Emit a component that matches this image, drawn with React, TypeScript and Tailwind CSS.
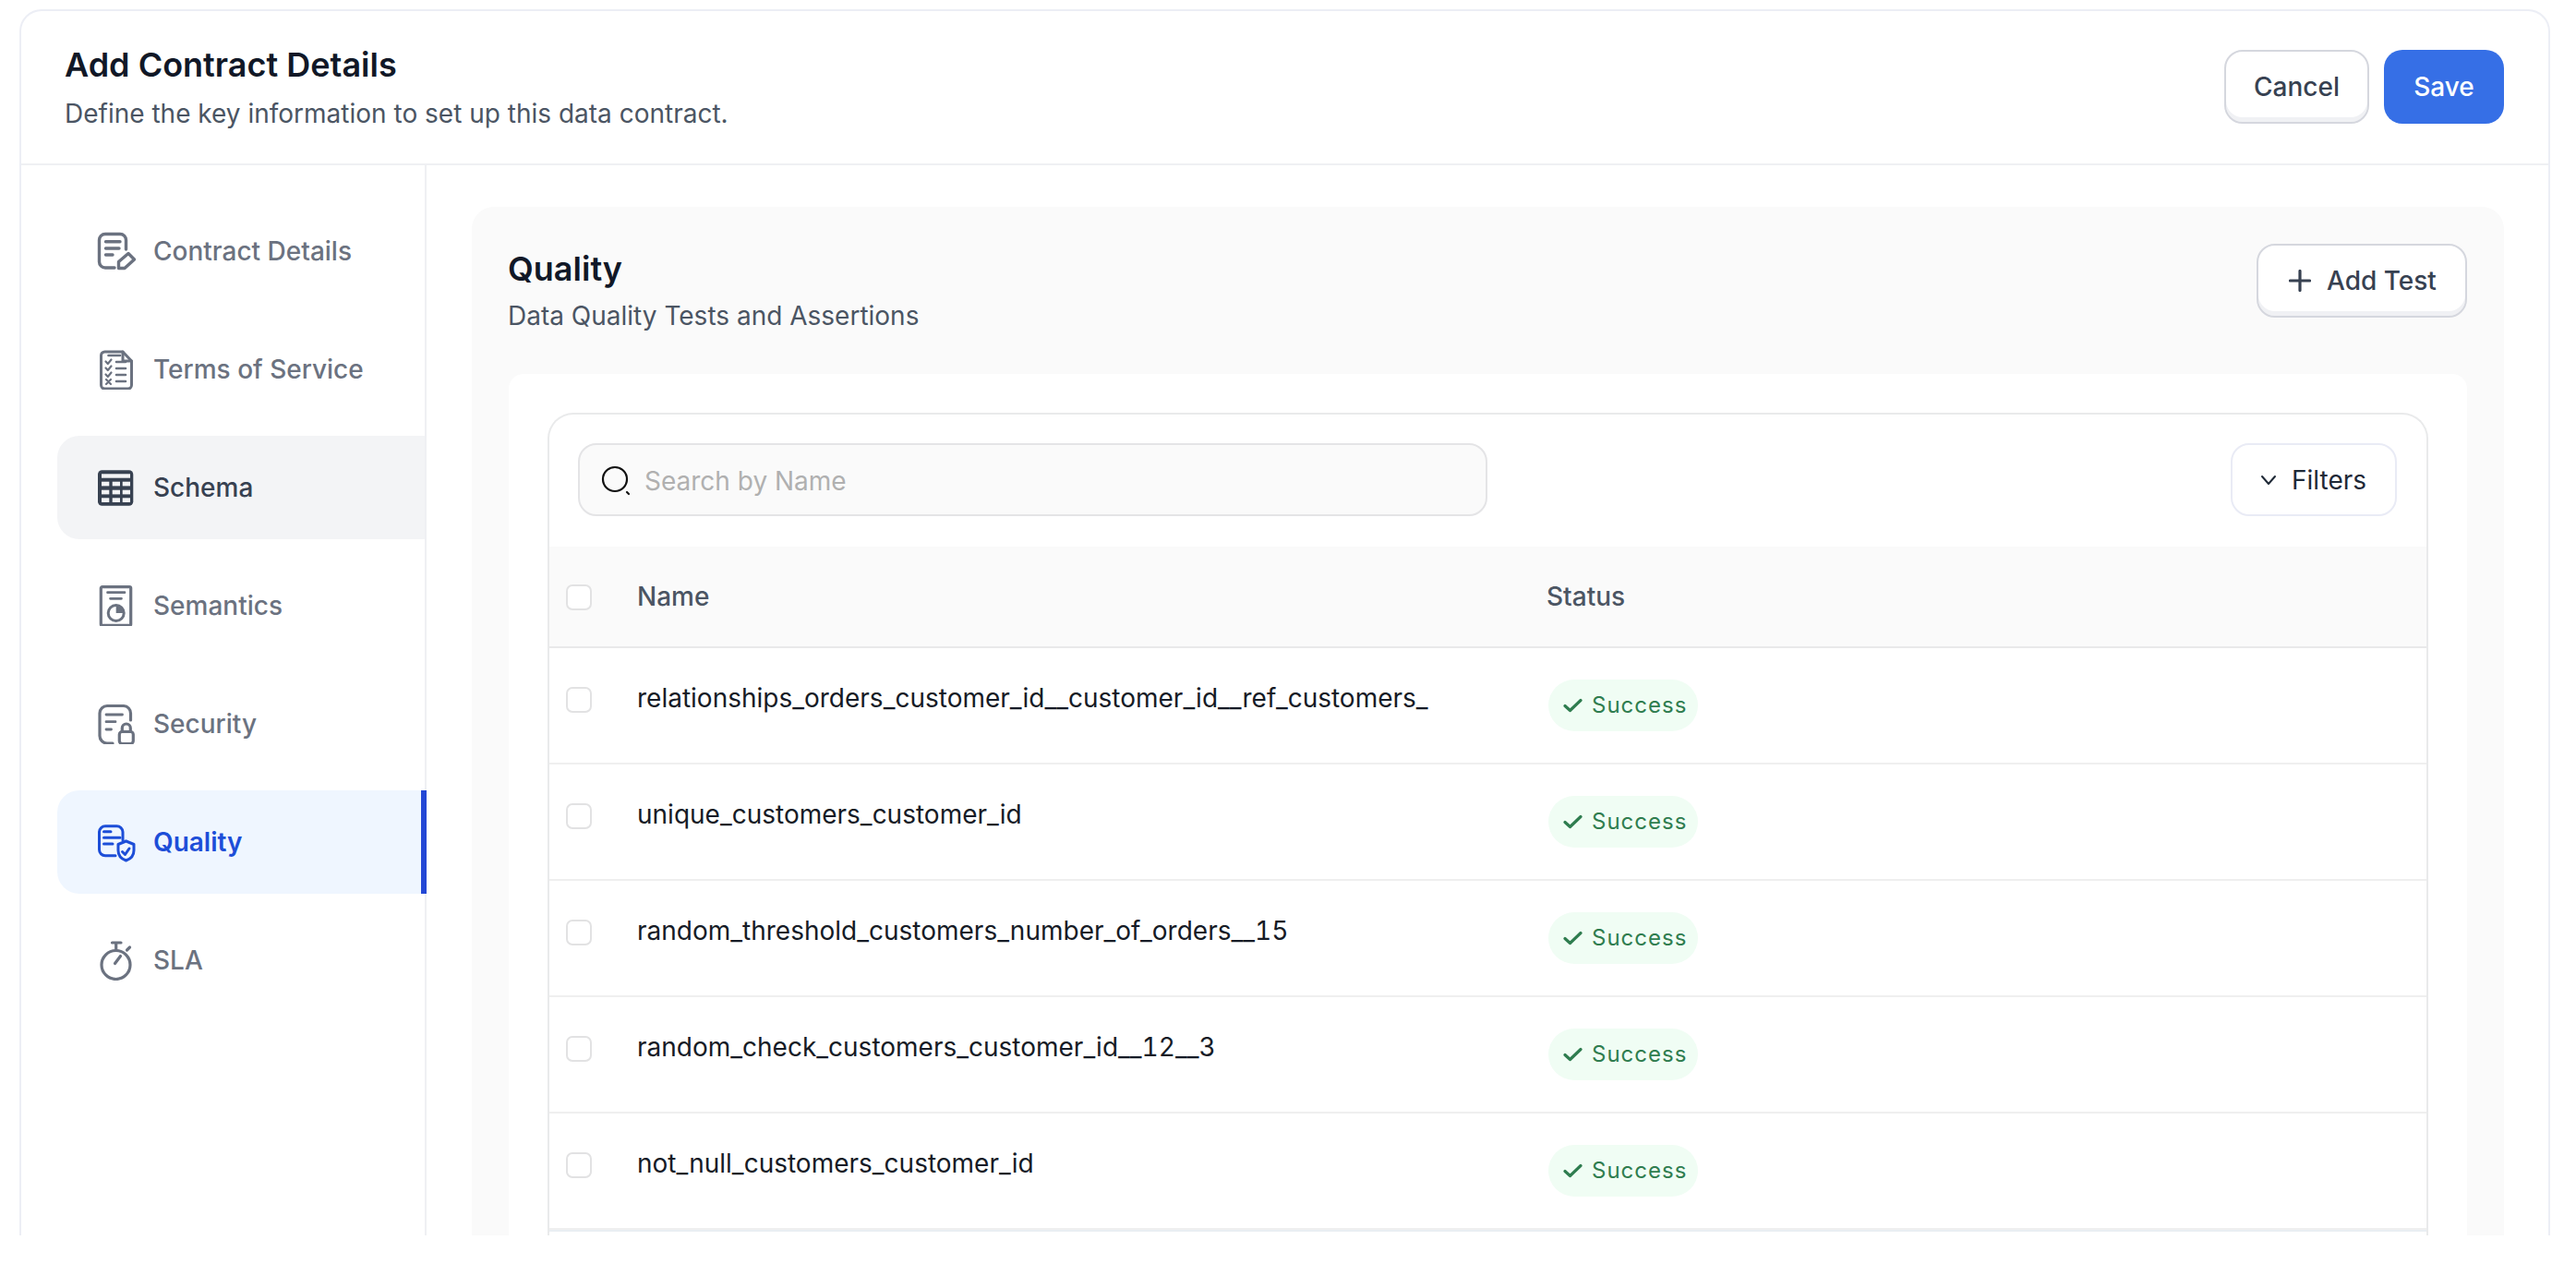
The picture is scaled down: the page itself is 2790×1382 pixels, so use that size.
const tests = [
  "relationships_orders_customer_id__customer_id__ref_customers_",
  "unique_customers_customer_id",
  "random_threshold_customers_number_of_orders__15",
  "random_check_customers_customer_id__12__3",
  "not_null_customers_customer_id",
];

function ContractIcon() {
  return (
    <svg width="44" height="44" viewBox="0 0 44 44" fill="none" stroke="currentColor" strokeWidth="3.4" strokeLinecap="round" strokeLinejoin="round">
      <path d="M20 40H10a6.500 6.500 0 0 1-6.500-6.500V10A6.500 6.500 0 0 1 10 3.500h16a6.500 6.500 0 0 1 6.500 6.500v10" />
      <path d="M10.500 11.700H26M10.500 19H25M10.500 26H18" />
      <path d="M24.500 40.500v-7L35 24.500l6.500 6.500L31 40.500z" />
    </svg>
  );
}

function TermsIcon() {
  return (
    <svg width="44" height="44" viewBox="0 0 44 44" fill="none" stroke="currentColor" strokeWidth="3" strokeLinecap="round" strokeLinejoin="round">
      <path d="M5.500 7a4 4 0 0 1 4-4H29l9.500 10v26a4 4 0 0 1-4 4h-25a4 4 0 0 1-4-4z" />
      <path d="M29 3v10h9.500" />
      <path d="M13.500 7H26M22 14h10M22 21h10M22 28h10M22 35h10" strokeWidth="2.600" />
      <path d="M10.500 13.500l2.300 2.500 3.700-4.500M10.500 20.500l2.300 2.500 3.700-4.500M10.500 27.500l2.300 2.500 3.700-4.500M11 33l5 5M16 33l-5 5" strokeWidth="2.200" />
    </svg>
  );
}

function SchemaIcon() {
  const cols = [6, 17.7, 28.7];
  const rows = [15.7, 24.7, 33.3];
  return (
    <svg width="44" height="44" viewBox="0 0 44 44">
      <rect x="2" y="3.300" width="38.300" height="38.400" rx="4.500" fill="currentColor" />
      <rect x="6" y="7.300" width="31" height="4.400" fill="#f3f4f6" />
      {rows.map((y) =>
        cols.map((x) => <rect key={`${x}-${y}`} x={x} y={y} width="8.300" height="4.700" fill="#f3f4f6" />)
      )}
    </svg>
  );
}

function SemanticsIcon() {
  return (
    <svg width="44" height="44" viewBox="0 0 44 44" fill="none" stroke="currentColor" strokeWidth="3.200">
      <rect x="5.300" y="1.600" width="32.400" height="41.800" rx="1.500" />
      <path d="M12.500 7.700H31M15.500 14.300h12" strokeWidth="2.700" strokeLinecap="round" />
      <circle cx="21.700" cy="30" r="8.500" strokeWidth="3" />
      <path d="M21.700 30v-8.500a8.500 8.500 0 0 1 8.500 8.500z" fill="currentColor" stroke="none" />
    </svg>
  );
}

function SecurityIcon() {
  return (
    <svg width="44" height="44" viewBox="0 0 44 44" fill="none" stroke="currentColor" strokeWidth="3.200" strokeLinecap="round" strokeLinejoin="round">
      <path d="M18 43h-6a8 8 0 0 1-8-8V10.500a8 8 0 0 1 8-8h18a8 8 0 0 1 7.500 8V18" />
      <path d="M11 12h17.500M11 19.700h10M11 28h5.500" strokeWidth="2.800" />
      <rect x="25.300" y="30.500" width="15" height="13" rx="3" />
      <path d="M28.300 30.500v-4a4.500 4.500 0 0 1 9 0v4" />
    </svg>
  );
}

function QualityIcon() {
  return (
    <svg width="44" height="44" viewBox="0 0 44 44" fill="none" stroke="currentColor" strokeWidth="3" strokeLinecap="round" strokeLinejoin="round">
      <path d="M21 36.800H10a6.500 6.500 0 0 1-6.500-6.500V11A6.500 6.500 0 0 1 10 4.800h12.500A6.500 6.500 0 0 1 29 11v9" />
      <path d="M8.500 10.700H16M8.500 17.300H26M8.500 24H18" />
      <path d="M32.500 21l8.500 3.500V31c0 6-4 9.500-8.500 11-4.500-1.500-8.500-5-8.500-11v-6.500z" />
      <path d="M28.500 32.500l3 3 4.500-6.500" />
    </svg>
  );
}

function SlaIcon() {
  return (
    <svg width="44" height="44" viewBox="0 0 44 44" fill="none" stroke="currentColor" strokeWidth="3.200" strokeLinecap="round">
      <circle cx="21.500" cy="27" r="15.500" />
      <path d="M17.500 3h9.500M21.700 3v8M33.500 11l3-3M20.500 25.500l6-8" />
    </svg>
  );
}

const navItems = [
  { label: "Contract Details", icon: <ContractIcon /> },
  { label: "Terms of Service", icon: <TermsIcon /> },
  { label: "Schema", icon: <SchemaIcon />, state: "hover" },
  { label: "Semantics", icon: <SemanticsIcon /> },
  { label: "Security", icon: <SecurityIcon /> },
  { label: "Quality", icon: <QualityIcon />, state: "active" },
  { label: "SLA", icon: <SlaIcon /> },
];

function Checkbox({ className = "" }: { className?: string }) {
  return <div className={`h-[28px] w-[28px] shrink-0 rounded-[7px] border-2 border-[#e2e2e3] bg-white ${className}`} />;
}

function StatusBadge() {
  return (
    <div className="flex h-[56px] w-[162px] items-center gap-[10px] rounded-full bg-[#f0fdf4] pl-[16px] text-[24px] tracking-[1px] text-[#2f7d4f]">
      <svg width="21" height="16" viewBox="0 0 21 16" fill="none" stroke="currentColor" strokeWidth="3.200" strokeLinecap="round" strokeLinejoin="round">
        <path d="M2 8.500l5.500 5L19 2.500" />
      </svg>
      Success
    </div>
  );
}

export default function App() {
  return (
    <div className="h-[1382px] bg-white font-[family-name:Inter,sans-serif]">
      <div className="h-[1338px] overflow-hidden pl-[21px] pr-[28px] pt-[10px]">
        <div className="flex h-[1328px] flex-col overflow-hidden rounded-t-[24px] border-2 border-b-0 border-[#eceef5]">
          <header className="flex h-[167px] shrink-0 items-center justify-between border-b-2 border-[#eff0f3] pl-[47px] pr-[48px]">
            <div>
              <h1 className="text-[36px] font-semibold leading-[46px] text-[#111827]">Add Contract Details</h1>
              <p className="mt-[10px] text-[28px] leading-[40px] text-[#4b5563]">Define the key information to set up this data contract.</p>
            </div>
            <div className="mb-[2px] flex gap-[16px]">
              <button className="h-[80px] w-[157px] rounded-[20px] border-2 border-[#d5d7de] bg-white text-[28px] font-[550] text-[#374151] shadow-[inset_0_-5px_0_#f0f1f4]">
                Cancel
              </button>
              <button className="h-[80px] w-[130px] rounded-[20px] bg-[#366fe6] text-[28px] font-[550] text-white">Save</button>
            </div>
          </header>

          <div className="flex min-h-0 flex-1">
            <aside className="flex w-[439px] shrink-0 flex-col gap-[16px] border-r-2 border-[#eff0f3] pl-[39px] pt-[37px]">
              {navItems.map((item) => (
                <div
                  key={item.label}
                  className={
                    item.state === "active"
                      ? "-mr-[2px] flex h-[112px] items-center gap-[18px] rounded-l-[24px] border-r-[6px] border-[#2347d5] bg-[#eff6ff] pl-[42px] text-[28px] font-semibold text-[#1d4ed8]"
                      : item.state === "hover"
                        ? "flex h-[112px] items-center gap-[18px] rounded-l-[24px] bg-[#f3f4f6] pl-[42px] text-[28px] font-medium text-[#374151]"
                        : "flex h-[112px] items-center gap-[18px] pl-[42px] text-[28px] font-medium text-[#6b7280]"
                  }
                >
                  {item.icon}
                  {item.label}
                </div>
              ))}
            </aside>

            <main className="min-w-0 flex-1 pl-[49px] pr-[48px] pt-[45px]">
              <section className="rounded-t-[24px] bg-[#fafafa] px-[40px] pt-[40px]">
                <div className="flex items-start justify-between">
                  <div className="-ml-[1px] pt-[3px]">
                    <h2 className="text-[36px] font-semibold leading-[48px] text-[#111827]">Quality</h2>
                    <p className="mt-[7px] text-[28px] leading-[40px] text-[#4b5563]">Data Quality Tests and Assertions</p>
                  </div>
                  <button className="flex h-[80px] w-[228px] items-center gap-[17px] rounded-[20px] border-2 border-[#d5d7de] bg-white pl-[33px] text-[28px] font-[550] text-[#374151] shadow-[inset_0_-5px_0_#f0f1f4]">
                    <svg width="24" height="24" viewBox="0 0 24 24" fill="none" stroke="currentColor" strokeWidth="3.200" strokeLinecap="round">
                      <path d="M12 1.500v21M1.500 12h21" />
                    </svg>
                    Add Test
                  </button>
                </div>

                <div className="mt-[43px] rounded-t-[16px] bg-white px-[42px] pt-[42px]">
                  <div className="overflow-hidden rounded-t-[28px] border-2 border-b-0 border-[#e9eaeb]">
                    <div className="flex items-center justify-between pl-[31px] pr-[32px] pt-[31px] pb-[33px]">
                      <div className="flex h-[79px] w-[985px] items-center gap-[14px] rounded-[20px] border-2 border-[#e4e4e6] bg-[#fafafa] pl-[22px]">
                        <svg width="34" height="34" viewBox="0 0 34 34" fill="none" stroke="#111111" strokeWidth="2.200" strokeLinecap="round" className="shrink-0">
                          <circle cx="16" cy="16" r="13" />
                          <path d="M29 30l2 2" />
                        </svg>
                        <input
                          placeholder="Search by Name"
                          className="min-w-0 flex-1 bg-transparent pt-[2px] text-[28px] text-[#111827] outline-none placeholder:text-[#b0b0b0]"
                        />
                      </div>
                      <button className="flex h-[79px] w-[180px] items-center gap-[16px] rounded-[20px] border-2 border-[#e9ebf5] bg-white pl-[30px] text-[28px] text-[#1f2937]">
                        <svg width="18" height="12" viewBox="0 0 18 12" fill="none" stroke="currentColor" strokeWidth="2" strokeLinecap="round" strokeLinejoin="round">
                          <path d="M2 2l7 8 7-8" />
                        </svg>
                        Filters
                      </button>
                    </div>

                    <div className="flex h-[110px] items-center border-b-2 border-[#e9e9ea] bg-[#fafafa] pl-[18px] text-[28px] font-medium text-[#4b5563]">
                      <Checkbox className="mr-[49px] mt-[2px]" />
                      <div className="w-[985px]">Name</div>
                      <div>Status</div>
                    </div>

                    {tests.map((name) => (
                      <div key={name} className="flex h-[126px] items-start border-b-2 border-[#efefef] pl-[18px] pt-[34px]">
                        <Checkbox className="mr-[49px] mt-[8px]" />
                        <div className="w-[987px] text-[28px] leading-[40px] text-[#161b26] tabular-nums">{name}</div>
                        <StatusBadge />
                      </div>
                    ))}
                    <div className="h-[8px] border-t-2 border-[#e9eef3]" />
                  </div>
                </div>
              </section>
            </main>
          </div>
        </div>
      </div>
    </div>
  );
}
